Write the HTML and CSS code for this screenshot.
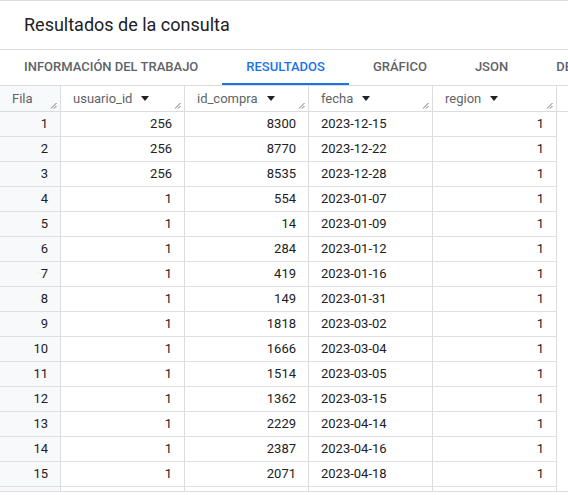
FILE: index.html
```html
<!DOCTYPE html>
<html lang="es">
<head>
<meta charset="utf-8">
<title>Resultados de la consulta</title>
<link rel="stylesheet" href="styles.css">
</head>
<body>
<div class="page">
  <header class="title-bar"><h1 class="title">Resultados de la consulta</h1></header>
  <nav class="tabs">
    <span class="tab">INFORMACIÓN DEL TRABAJO</span>
    <span class="tab active">RESULTADOS</span>
    <span class="tab">GRÁFICO</span>
    <span class="tab">JSON</span>
    <span class="tab">DETALLES DE EJECUCIÓN</span>
  </nav>
  <div class="grid-wrap">
    <div class="row head">
      <div class="cell c-fila"><span class="htext">Fila</span><svg class="grip" viewBox="0 0 7 7"><path d="M1 6.5 L6.5 1 M4 6.5 L6.5 4"/></svg></div>
      <div class="cell c-col"><span class="htext">usuario_id</span><span class="caret"></span><svg class="grip" viewBox="0 0 7 7"><path d="M1 6.5 L6.5 1 M4 6.5 L6.5 4"/></svg></div>
      <div class="cell c-col"><span class="htext">id_compra</span><span class="caret"></span><svg class="grip" viewBox="0 0 7 7"><path d="M1 6.5 L6.5 1 M4 6.5 L6.5 4"/></svg></div>
      <div class="cell c-col"><span class="htext">fecha</span><span class="caret"></span><svg class="grip" viewBox="0 0 7 7"><path d="M1 6.5 L6.5 1 M4 6.5 L6.5 4"/></svg></div>
      <div class="cell c-col"><span class="htext">region</span><span class="caret"></span><svg class="grip" viewBox="0 0 7 7"><path d="M1 6.5 L6.5 1 M4 6.5 L6.5 4"/></svg></div>
      <div class="cell c-fill"></div>
    </div>
    <div class="row"><div class="cell c-fila num">1</div><div class="cell c-col num">256</div><div class="cell c-col num">8300</div><div class="cell c-col">2023-12-15</div><div class="cell c-col num">1</div></div>
    <div class="row"><div class="cell c-fila num">2</div><div class="cell c-col num">256</div><div class="cell c-col num">8770</div><div class="cell c-col">2023-12-22</div><div class="cell c-col num">1</div></div>
    <div class="row"><div class="cell c-fila num">3</div><div class="cell c-col num">256</div><div class="cell c-col num">8535</div><div class="cell c-col">2023-12-28</div><div class="cell c-col num">1</div></div>
    <div class="row"><div class="cell c-fila num">4</div><div class="cell c-col num">1</div><div class="cell c-col num">554</div><div class="cell c-col">2023-01-07</div><div class="cell c-col num">1</div></div>
    <div class="row"><div class="cell c-fila num">5</div><div class="cell c-col num">1</div><div class="cell c-col num">14</div><div class="cell c-col">2023-01-09</div><div class="cell c-col num">1</div></div>
    <div class="row"><div class="cell c-fila num">6</div><div class="cell c-col num">1</div><div class="cell c-col num">284</div><div class="cell c-col">2023-01-12</div><div class="cell c-col num">1</div></div>
    <div class="row"><div class="cell c-fila num">7</div><div class="cell c-col num">1</div><div class="cell c-col num">419</div><div class="cell c-col">2023-01-16</div><div class="cell c-col num">1</div></div>
    <div class="row"><div class="cell c-fila num">8</div><div class="cell c-col num">1</div><div class="cell c-col num">149</div><div class="cell c-col">2023-01-31</div><div class="cell c-col num">1</div></div>
    <div class="row"><div class="cell c-fila num">9</div><div class="cell c-col num">1</div><div class="cell c-col num">1818</div><div class="cell c-col">2023-03-02</div><div class="cell c-col num">1</div></div>
    <div class="row"><div class="cell c-fila num">10</div><div class="cell c-col num">1</div><div class="cell c-col num">1666</div><div class="cell c-col">2023-03-04</div><div class="cell c-col num">1</div></div>
    <div class="row"><div class="cell c-fila num">11</div><div class="cell c-col num">1</div><div class="cell c-col num">1514</div><div class="cell c-col">2023-03-05</div><div class="cell c-col num">1</div></div>
    <div class="row"><div class="cell c-fila num">12</div><div class="cell c-col num">1</div><div class="cell c-col num">1362</div><div class="cell c-col">2023-03-15</div><div class="cell c-col num">1</div></div>
    <div class="row"><div class="cell c-fila num">13</div><div class="cell c-col num">1</div><div class="cell c-col num">2229</div><div class="cell c-col">2023-04-14</div><div class="cell c-col num">1</div></div>
    <div class="row"><div class="cell c-fila num">14</div><div class="cell c-col num">1</div><div class="cell c-col num">2387</div><div class="cell c-col">2023-04-16</div><div class="cell c-col num">1</div></div>
    <div class="row"><div class="cell c-fila num">15</div><div class="cell c-col num">1</div><div class="cell c-col num">2071</div><div class="cell c-col">2023-04-18</div><div class="cell c-col num">1</div></div>
    <div class="row"><div class="cell c-fila num"></div><div class="cell c-col num"></div><div class="cell c-col num"></div><div class="cell c-col"></div><div class="cell c-col num"></div></div>
  </div>
</div>
</body>
</html>
```
FILE: styles.css
```css
* { box-sizing: border-box; }
html, body { margin: 0; padding: 0; background: #fff; }
body {
  width: 568px;
  height: 495px;
  overflow: hidden;
  font-family: Roboto, "Liberation Sans", sans-serif;
  color: #202124;
}
.page { width: 568px; }

.title-bar {
  border-top: 1px solid #dadce0;
  border-bottom: 1px solid #dadce0;
  padding: 12px 24px;
  height: 50px;
}
.title {
  margin: 0;
  font-size: 18px;
  line-height: 24px;
  font-weight: 400;
  color: #202124;
  white-space: nowrap;
}

.tabs {
  display: flex;
  height: 35px;
  white-space: nowrap;
  overflow: hidden;
}
.tab {
  flex: none;
  padding: 0 24px;
  font-size: 13px;
  font-weight: 500;
  color: #5f6368;
  line-height: 33px;
  border-bottom: 2px solid transparent;
}
.tab.active {
  color: #1a73e8;
  border-bottom-color: #1a73e8;
}

.grid-wrap {
  border-top: 1px solid #dadce0;
  border-bottom: 1px solid #dadce0;
  height: 407px;
  overflow: hidden;
}
.row {
  display: flex;
  height: 25px;
  width: 557px;
}
.row.head {
  height: 26px;
  width: 568px;
  border-bottom: 1px solid #dadce0;
}
.cell {
  flex: none;
  height: 100%;
  border-right: 1px solid #dadce0;
  border-bottom: 1px solid #e0e0e0;
  font-size: 13px;
  line-height: 24px;
  padding: 0 12px;
  white-space: nowrap;
  overflow: hidden;
}
.row.head .cell {
  border-bottom: none;
  position: relative;
  display: flex;
  align-items: center;
  color: #5f6368;
  line-height: 25px;
}
.c-fila { width: 61px; background: #f8f9fa; }
.c-col { width: 124px; }
.c-fill { flex: 1; border-right: none; }
.num { text-align: right; }

.htext { color: #5f6368; }
.caret {
  width: 0;
  height: 0;
  margin-left: 9px;
  border-left: 4.5px solid transparent;
  border-right: 4.5px solid transparent;
  border-top: 5px solid #202124;
}
.grip {
  position: absolute;
  right: 3px;
  bottom: 2px;
  width: 7px;
  height: 7px;
  fill: none;
  stroke: #5f6368;
  stroke-width: 0.9;
}
```
